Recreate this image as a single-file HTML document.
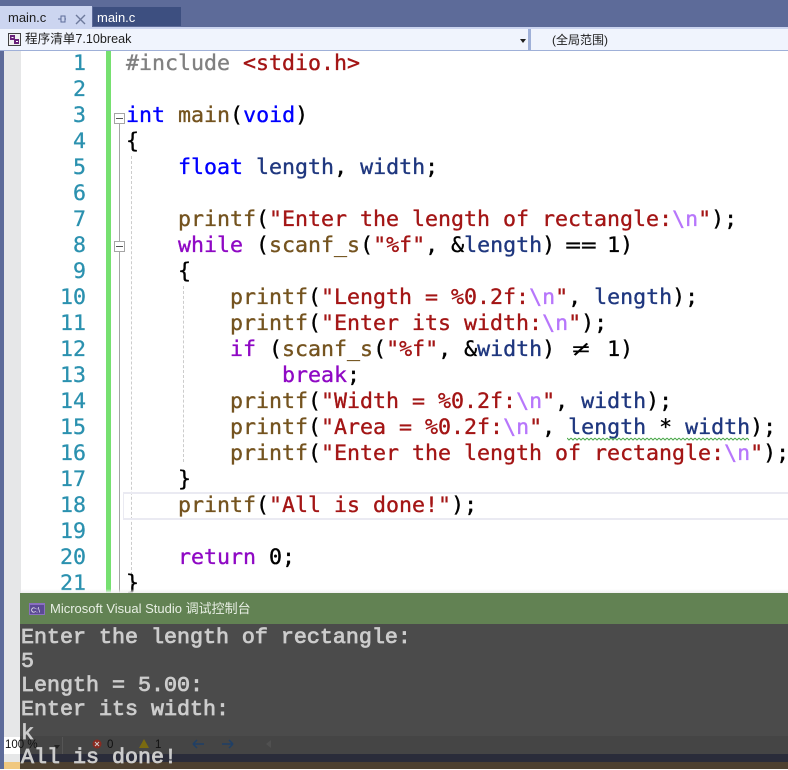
<!DOCTYPE html>
<html><head><meta charset="utf-8"><style>
html,body{margin:0;padding:0}
body{width:788px;height:769px;position:relative;overflow:hidden;background:#fff;font-family:"Liberation Sans","Noto Sans CJK SC",sans-serif}
.a{position:absolute}
.l{position:absolute;left:126px;white-space:pre;font:21.6px/26px "DejaVu Sans Mono",monospace;color:#000;height:26px;-webkit-text-stroke:.35px currentColor;margin-top:1px}
.n{position:absolute;left:40px;width:46px;text-align:right;font:21.6px/26px "DejaVu Sans Mono",monospace;color:#2b91af;white-space:pre;height:26px;-webkit-text-stroke:.3px currentColor;margin-top:1px}
.c{position:absolute;left:21px;white-space:pre;font:21.67px/24px "Liberation Mono",monospace;color:#ccc;height:24px;-webkit-text-stroke:.8px currentColor}
.k{color:#00f}.p{color:#8f08c4}.f{color:#74531f}.v{color:#1f377f}.s{color:#a31515}.e{color:#b776fb}.g{color:#808080}
.w{display:inline-block;width:26px;text-align:center;transform:scaleX(1.2)}
.ne{display:inline-block;width:26px;text-align:center;transform:scaleX(1.4);-webkit-text-stroke:0}
</style></head><body>
<div class="a" style="left:0;top:0;width:788px;height:769px;background:#5d6b99"></div>
<div class="a" style="left:0;top:6px;width:92px;height:21px;background:#ccd5f0"></div>
<div class="a" style="left:8px;top:10px;font-size:13px;line-height:15px;color:#1e1e1e">main.c</div>
<svg class="a" style="left:56px;top:12px" width="32" height="14"><path d="M2 7H5M5 4V10H9V4ZM9 7H10" stroke="#5d6b99" fill="none"/><path d="M20 3L29 12M29 3L20 12" stroke="#6e7a9c" stroke-width="1.4"/></svg>
<div class="a" style="left:93px;top:7px;width:88px;height:19px;background:#3d4f80"></div>
<div class="a" style="left:97px;top:10px;font-size:13px;line-height:15px;color:#fff">main.c</div>
<div class="a" style="left:0;top:27px;width:788px;height:2px;background:#ccd5f0"></div>
<div class="a" style="left:0;top:29px;width:788px;height:21px;background:#f0f4fd"></div>
<div class="a" style="left:0;top:50px;width:788px;height:1px;background:#9fb0d8"></div>
<div class="a" style="left:528px;top:29px;width:3px;height:21px;background:#9fb0d8"></div>
<svg class="a" style="left:8px;top:33px" width="14" height="14"><rect x=".5" y=".5" width="12" height="12" fill="#f0eff1" stroke="#424242"/><path d="M2 2h5v5h-5zM6 6h5v5h-5z" fill="#68217a"/><path d="M3.5 4.5h2M8 8.5h2" stroke="#fff"/></svg>
<div class="a" style="left:25px;top:32px;font-size:12.6px;line-height:15px;color:#1e1e1e;white-space:pre">程序清单7.10break</div>
<div class="a" style="left:552px;top:33px;font-size:12px;line-height:15px;color:#1e1e1e;white-space:pre">(全局范围)</div>
<div class="a" style="left:520px;top:39px;width:0;height:0;border:3.5px solid transparent;border-top:4px solid #1e1e1e;border-bottom:0"></div>

<div class="a" style="left:0;top:51px;width:788px;height:718px;background:#fff"></div>
<div class="a" style="left:0;top:51px;width:4px;height:718px;background:#5d6b99"></div>
<div class="a" style="left:4px;top:51px;width:17px;height:718px;background:#e6e7e8"></div>
<div class="a" style="left:106px;top:51px;width:5px;height:543px;background:#76e070"></div>
<div class="a" style="left:119px;top:122px;width:1px;height:472px;background:#a5a5a5"></div>
<div class="a" style="left:114px;top:113px;width:9px;height:9px;background:#fff;border:1px solid #a5a5a5"></div>
<div class="a" style="left:116px;top:118px;width:7px;height:1px;background:#555"></div>
<div class="a" style="left:114px;top:241px;width:9px;height:9px;background:#fff;border:1px solid #a5a5a5"></div>
<div class="a" style="left:116px;top:246px;width:7px;height:1px;background:#555"></div>
<div class="a" style="left:131px;top:156px;width:0;height:434px;border-left:1px dashed #ccc"></div>
<div class="a" style="left:183px;top:286px;width:0;height:176px;border-left:1px dashed #ccc"></div>
<div class="a" style="left:123px;top:492px;width:665px;height:24px;border:1px solid #eaeaf2;border-right:0;border-width:2px 0 2px 1px"></div>

<div class="n" style="top:50px">1</div><div class="n" style="top:76px">2</div><div class="n" style="top:102px">3</div>
<div class="n" style="top:128px">4</div><div class="n" style="top:154px">5</div><div class="n" style="top:180px">6</div>
<div class="n" style="top:206px">7</div><div class="n" style="top:232px">8</div><div class="n" style="top:258px">9</div>
<div class="n" style="top:284px">10</div><div class="n" style="top:310px">11</div><div class="n" style="top:336px">12</div>
<div class="n" style="top:362px">13</div><div class="n" style="top:388px">14</div><div class="n" style="top:414px">15</div>
<div class="n" style="top:440px">16</div><div class="n" style="top:466px">17</div><div class="n" style="top:492px">18</div>
<div class="n" style="top:518px">19</div><div class="n" style="top:544px">20</div><div class="n" style="top:570px">21</div>

<div class="l" style="top:50px"><span class="g">#include </span><span class="s">&lt;stdio.h&gt;</span></div>
<div class="l" style="top:102px"><span class="k">int</span> <span class="f">main</span>(<span class="k">void</span>)</div>
<div class="l" style="top:128px">{</div>
<div class="l" style="top:154px">    <span class="k">float</span> <span class="v">length</span>, <span class="v">width</span>;</div>
<div class="l" style="top:206px">    <span class="f">printf</span>(<span class="s">"Enter the length of rectangle:</span><span class="e">\n</span><span class="s">"</span>);</div>
<div class="l" style="top:232px">    <span class="p">while</span> (<span class="f">scanf_s</span>(<span class="s">"%f"</span>, &amp;<span class="v">length</span>) <span class="w">==</span> 1)</div>
<div class="l" style="top:258px">    {</div>
<div class="l" style="top:284px">        <span class="f">printf</span>(<span class="s">"Length = %0.2f:</span><span class="e">\n</span><span class="s">"</span>, <span class="v">length</span>);</div>
<div class="l" style="top:310px">        <span class="f">printf</span>(<span class="s">"Enter its width:</span><span class="e">\n</span><span class="s">"</span>);</div>
<div class="l" style="top:336px">        <span class="p">if</span> (<span class="f">scanf_s</span>(<span class="s">"%f"</span>, &amp;<span class="v">width</span>) <span class="ne">≠</span> 1)</div>
<div class="l" style="top:362px">            <span class="p">break</span>;</div>
<div class="l" style="top:388px">        <span class="f">printf</span>(<span class="s">"Width = %0.2f:</span><span class="e">\n</span><span class="s">"</span>, <span class="v">width</span>);</div>
<div class="l" style="top:414px">        <span class="f">printf</span>(<span class="s">"Area = %0.2f:</span><span class="e">\n</span><span class="s">"</span>, <span class="v">length</span> * <span class="v">width</span>);</div>
<div class="l" style="top:440px">        <span class="f">printf</span>(<span class="s">"Enter the length of rectangle:</span><span class="e">\n</span><span class="s">"</span>);</div>
<div class="l" style="top:466px">    }</div>
<div class="l" style="top:492px">    <span class="f">printf</span>(<span class="s">"All is done!"</span>);</div>
<div class="l" style="top:544px">    <span class="p">return</span> 0;</div>
<div class="l" style="top:570px">}</div>
<svg class="a" style="left:567px;top:437px" width="182" height="5"><defs><pattern id="sq" width="4" height="5" patternUnits="userSpaceOnUse"><path d="M0 1l2 2 2-2" fill="none" stroke="#4aa84a"/></pattern></defs><rect width="182" height="5" fill="url(#sq)"/></svg>
<div class="a" style="left:21px;top:589px;width:767px;height:4px;background:linear-gradient(#fff0,#f0f0f0)"></div>

<div class="a" style="left:20px;top:593px;width:768px;height:31px;background:#628253"></div>
<div class="a" style="left:20px;top:624px;width:768px;height:145px;background:#4b4b4b"></div>
<svg class="a" style="left:29px;top:603px" width="16" height="12"><rect width="16" height="12" fill="#8a6fc0"/><rect x="1" y="2" width="14" height="9" fill="#5b4a94"/><text x="2" y="9.5" font-size="7" fill="#fff" font-family="Liberation Sans">C:\</text></svg>
<div class="a" style="left:50px;top:600px;font-size:13px;line-height:17px;color:#e8efe4;white-space:pre">Microsoft Visual Studio 调试控制台</div>

<div class="a" style="left:20px;top:736px;width:768px;height:18px;background:#454545"></div>
<div class="a" style="left:20px;top:754px;width:768px;height:8px;background:#2a2c3a"></div>
<div class="a" style="left:20px;top:762px;width:768px;height:7px;background:#4d4030"></div>
<div class="a" style="left:4px;top:737px;width:16px;height:17px;background:#fff"></div>
<div class="a" style="left:62px;top:737px;width:1px;height:17px;background:#555"></div>
<div class="a" style="left:5px;top:738px;font-size:11.5px;line-height:15px;color:#111;white-space:pre">100 %</div>
<div class="a" style="left:54px;top:745px;width:0;height:0;border:3.5px solid transparent;border-top:4px solid #222;border-bottom:0"></div>
<div class="a" style="left:4px;top:762px;width:16px;height:7px;background:#f0c880"></div>
<svg class="a" style="left:90px;top:736px" width="190" height="16"><circle cx="7" cy="8" r="4.5" fill="#8a2a20"/><path d="M5 6l4 4M9 6l-4 4" stroke="#ccc"/><path d="M54 3l5 9h-10z" fill="#7a6a10"/><path d="M103 8h11M103 8l4-4M103 8l4 4M143 8h-11M143 8l-4-4M143 8l-4 4" stroke="#1f3f66" stroke-width="1.5" fill="none"/><path d="M181 4v8l-5-4z" fill="#505050"/></svg>
<div class="a" style="left:107px;top:738px;font-size:11.5px;line-height:15px;color:#111">0</div>
<div class="a" style="left:155px;top:738px;font-size:11.5px;line-height:15px;color:#111">1</div>

<div class="c" style="top:626px">Enter the length of rectangle:</div>
<div class="c" style="top:650px">5</div>
<div class="c" style="top:674px">Length = 5.00:</div>
<div class="c" style="top:698px">Enter its width:</div>
<div class="c" style="top:722px">k</div>
<div class="c" style="top:746px">All is done!</div>
</body></html>
